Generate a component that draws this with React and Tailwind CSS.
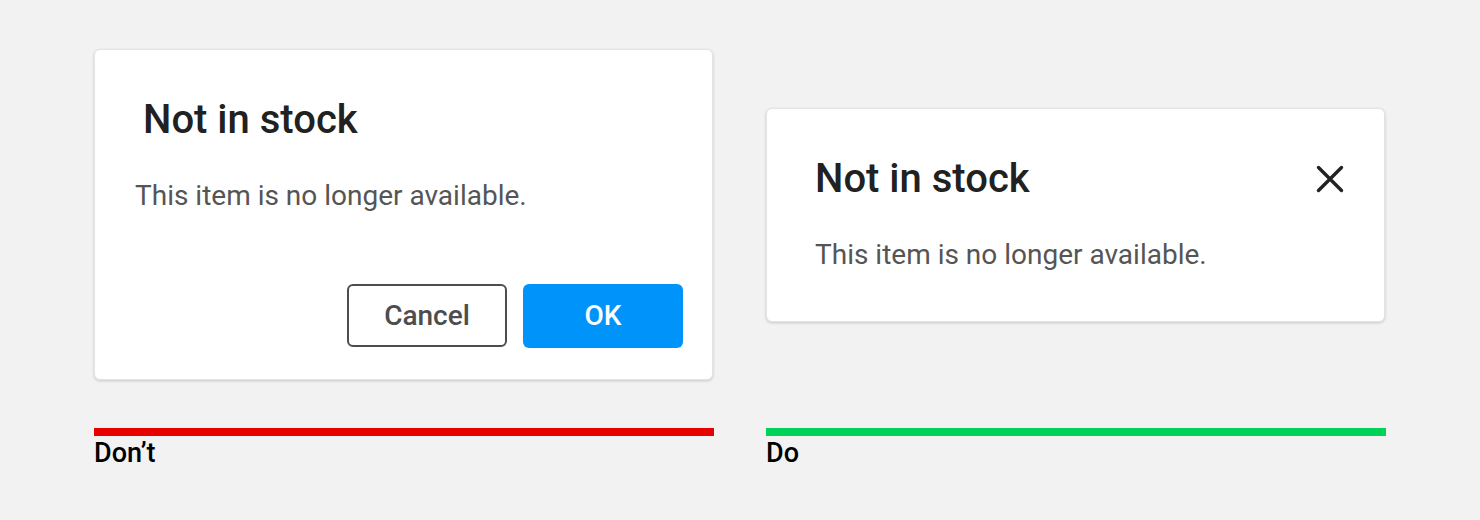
import React from 'react';

const font = { fontFamily: 'Roboto, "Liberation Sans", sans-serif' };

const CloseIcon = () => (
    <svg width="28" height="28" viewBox="0 0 28 28" fill="none" className="shrink-0">
        <path d="M2.5 2.5 L25.5 25.5 M25.5 2.5 L2.5 25.5" stroke="#222" strokeWidth="3.4" strokeLinecap="round" />
    </svg>
);

const Column = ({ children, color, label }) => (
    <div className="flex flex-col">
        <div className="h-[331px] flex items-center">{children}</div>
        <div className={`mt-[48px] h-[8px] w-full ${color}`}></div>
        <div className="mt-[2px] text-[27px] leading-[30px] font-medium text-black">{label}</div>
    </div>
);

export default function App() {
    return (
        <div className="w-[1480px] h-[520px] bg-[#f2f2f2] pt-[49px]" style={font}>
            <div className="grid grid-cols-[620px_620px] gap-[52px] justify-center">
                <Column color="bg-[#e60000]" label="Don’t">
                    <div className="w-[619px] h-[331px] bg-white rounded-md shadow-[0_1px_3px_rgba(0,0,0,0.18)] border border-[#e4e4e4] flex flex-col">
                        <h2 className="pl-[48px] pt-[47px] text-[40px] leading-[46px] font-medium text-[#212121]">Not in stock</h2>
                        <p className="pl-[40px] mt-[36px] text-[28px] leading-[34px] text-[#555]">This item is no longer available.</p>
                        <div className="mt-auto mb-[31px] mr-[29px] flex justify-end gap-[16px]">
                            <button className="w-[160px] h-[63px] rounded-[6px] border-2 border-[#4d4d4d] text-[#4d4d4d] text-[28px] font-medium bg-white">Cancel</button>
                            <button className="w-[160px] h-[64px] rounded-[6px] bg-[#0094fa] text-white text-[28px] font-medium">OK</button>
                        </div>
                    </div>
                </Column>
                <Column color="bg-[#00d157]" label="Do">
                    <div className="w-[619px] h-[214px] bg-white rounded-md shadow-[0_1px_3px_rgba(0,0,0,0.18)] border border-[#e4e4e4] flex flex-col">
                        <div className="pl-[48px] pr-[40px] pt-[47px] flex items-center justify-between">
                            <h2 className="text-[40px] leading-[46px] font-medium text-[#212121]">Not in stock</h2>
                            <CloseIcon />
                        </div>
                        <p className="pl-[48px] mt-[36px] text-[28px] leading-[34px] text-[#555]">This item is no longer available.</p>
                    </div>
                </Column>
            </div>
        </div>
    );
}
